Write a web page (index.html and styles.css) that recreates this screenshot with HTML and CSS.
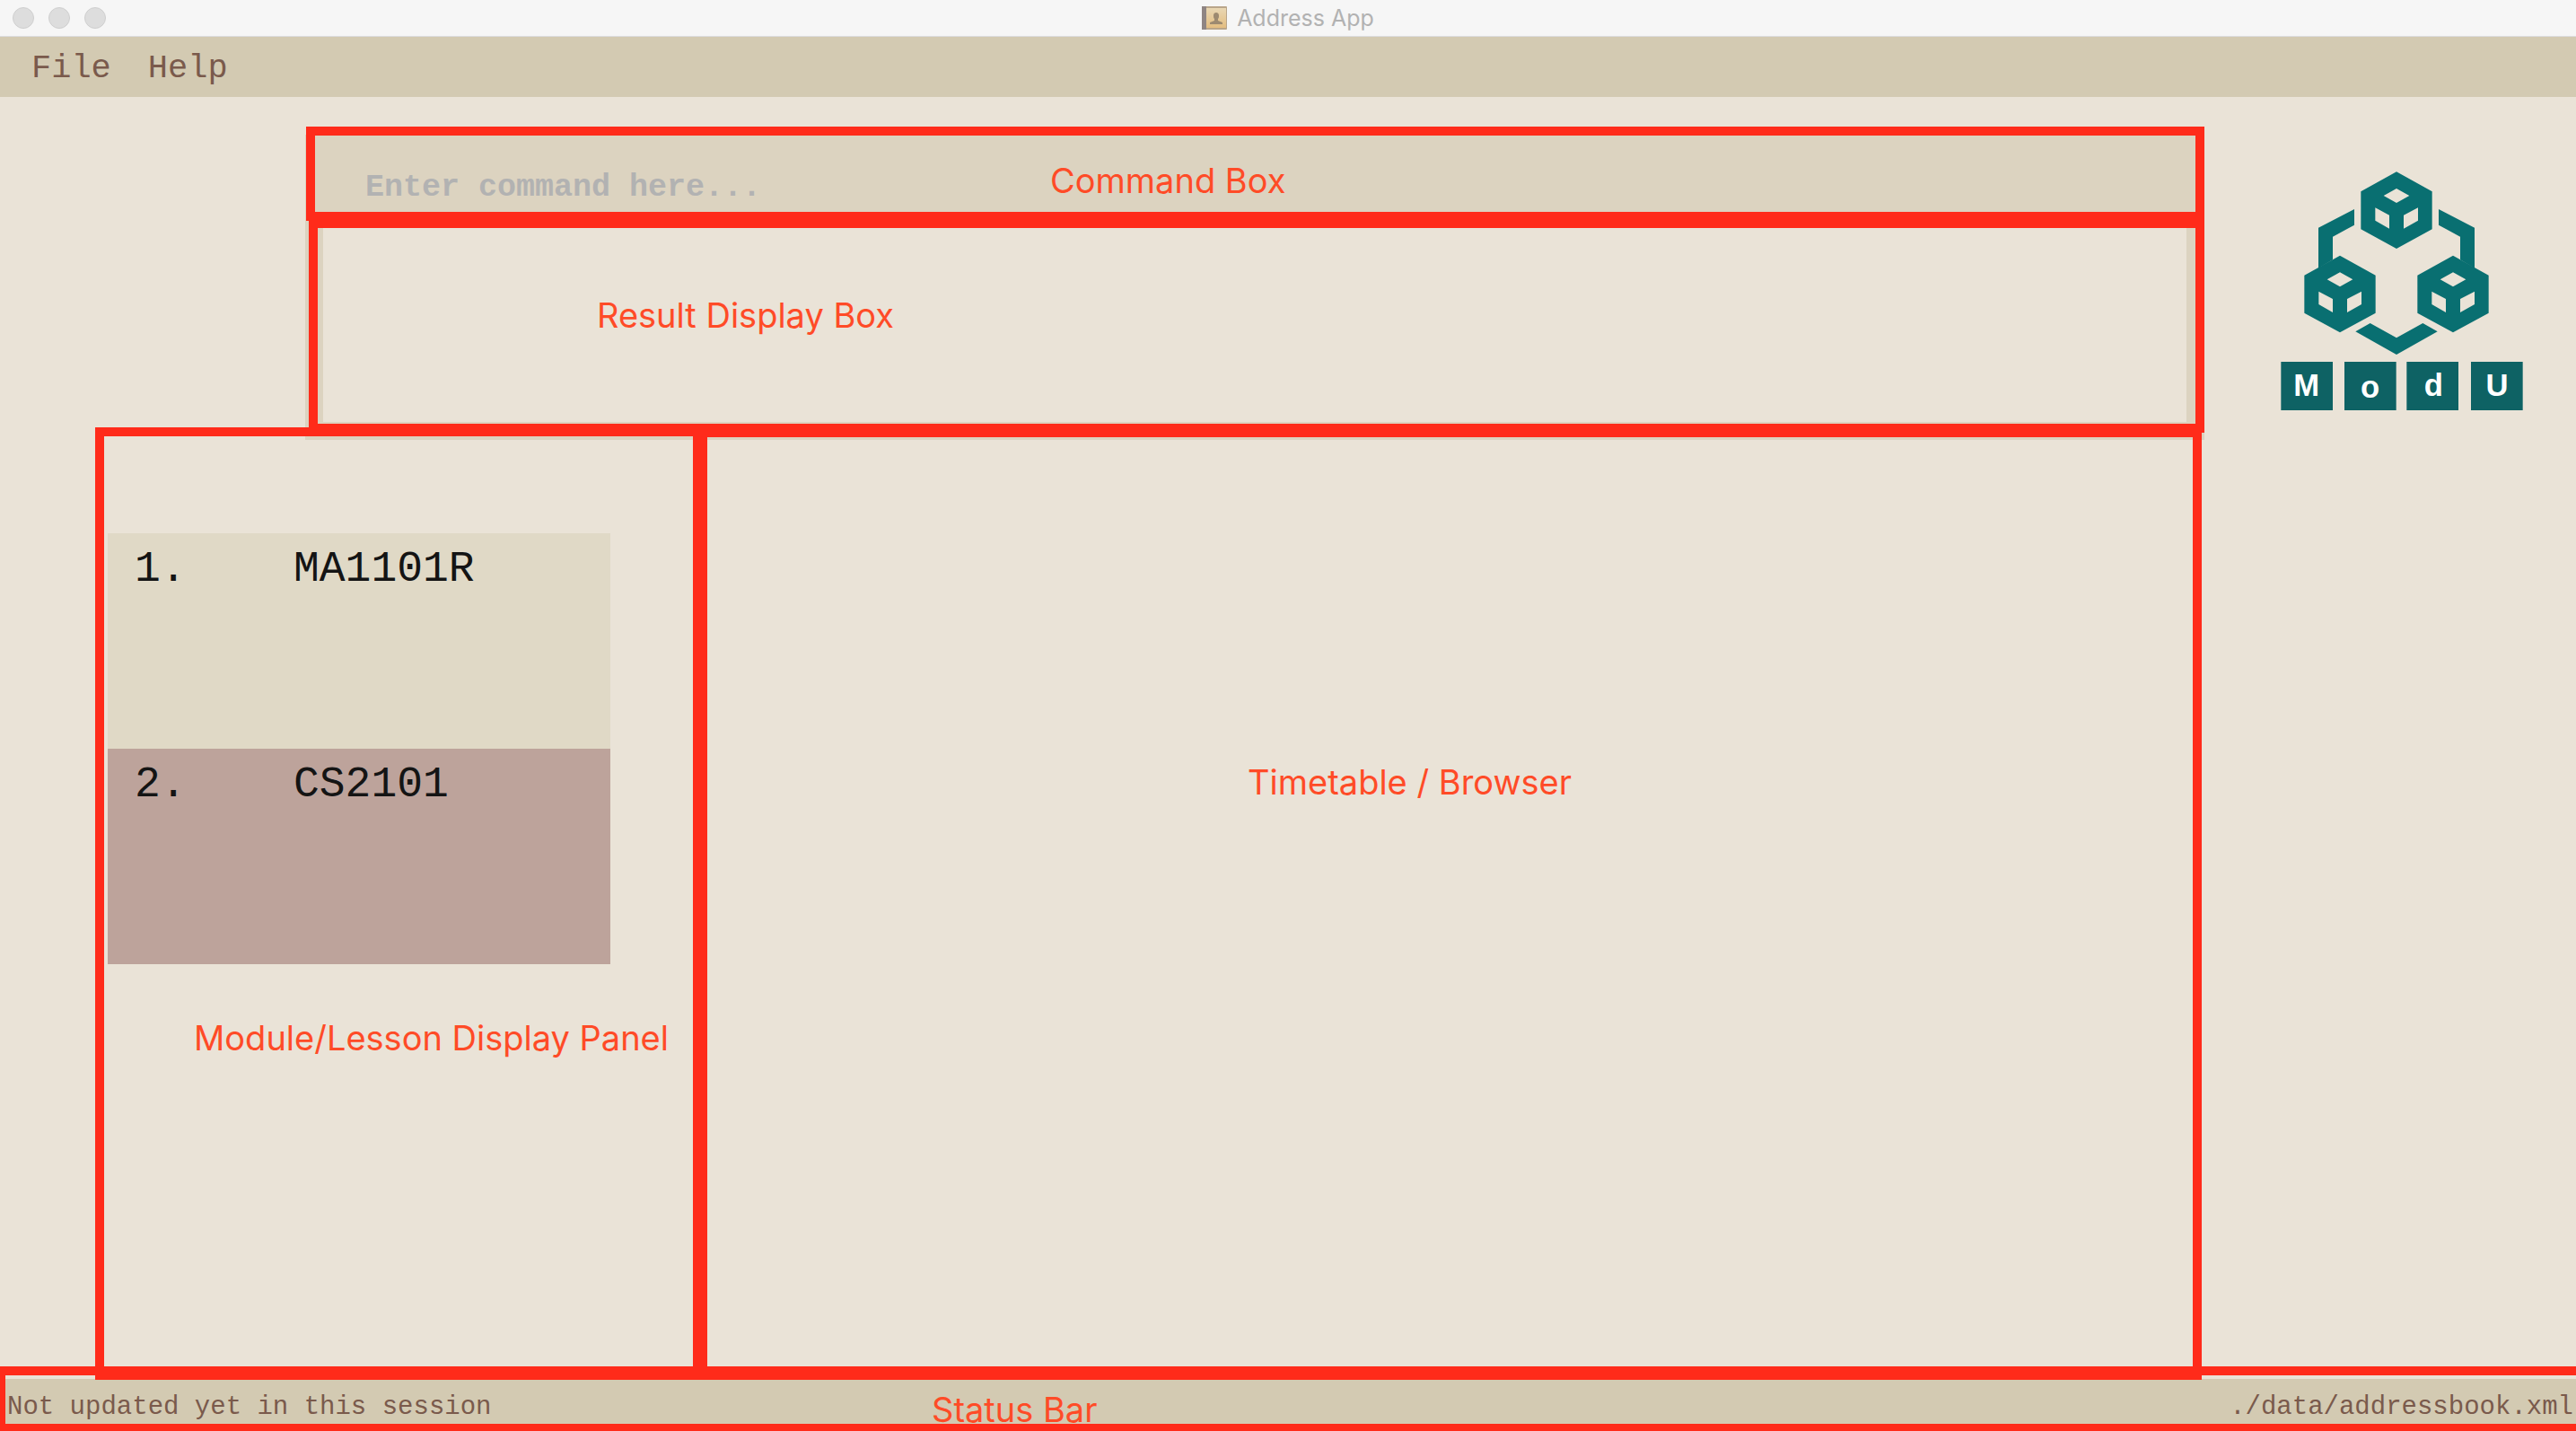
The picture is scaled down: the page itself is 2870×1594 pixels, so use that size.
FILE: index.html
```html
<!DOCTYPE html>
<html lang="en">
<head>
<meta charset="utf-8">
<title>Address App</title>
<link rel="stylesheet" href="styles.css">
</head>
<body>
<header class="titlebar">
  <div class="lights">
    <button class="light" type="button" aria-label="Close"></button>
    <button class="light" type="button" aria-label="Minimize"></button>
    <button class="light" type="button" aria-label="Zoom"></button>
  </div>
  <h1 class="title">
    <svg class="book" viewBox="0 0 28 26" aria-hidden="true">
      <defs>
        <linearGradient id="cover" x1="0" y1="0" x2="0" y2="1">
          <stop offset="0" stop-color="#e9d7b4"/>
          <stop offset="1" stop-color="#e3bd80"/>
        </linearGradient>
      </defs>
      <rect x="0" y="0" width="28" height="26" rx="1" fill="#b9a58a"/>
      <rect x="0" y="0" width="5" height="26" fill="#8f8583"/>
      <rect x="5" y="2" width="22" height="22" fill="url(#cover)"/>
      <path d="M9 20v-2l5-2v-2c-1-1-1-2-1-4 0-4 6-4 6 0 0 2 0 3-1 4v2l5 2v2z" fill="#9d8a70"/>
    </svg>
    <span>Address App</span>
  </h1>
</header>
<nav class="menubar">
  <button class="menu" type="button">File</button>
  <button class="menu" type="button">Help</button>
</nav>
<main class="main">
  <div class="workspace">
    <section class="command region">
      <input class="command-input" id="command" type="text" placeholder="Enter command here...">
      <div class="callout callout-command">
        <label class="callout-label" for="command">Command Box</label>
      </div>
    </section>
    <section class="result region">
      <div class="callout callout-result">
        <p class="callout-label">Result Display Box</p>
      </div>
    </section>
    <div class="panels">
      <section class="modules region">
        <ol class="module-list">
          <li class="module"><span class="module-index">1.</span><span>MA1101R</span></li>
          <li class="module module-selected"><span class="module-index">2.</span><span>CS2101</span></li>
        </ol>
        <div class="callout callout-modules">
          <p class="callout-label">Module/Lesson Display Panel</p>
        </div>
      </section>
      <section class="browser region">
        <div class="callout callout-browser">
          <p class="callout-label">Timetable / Browser</p>
        </div>
      </section>
    </div>
  </div>
  <aside class="brand">
    <svg class="logo" viewBox="363 212 810 801" role="img" aria-label="ModU">
      <defs>
        <path id="cube" fill-rule="evenodd" d="M119 0L238 66V192L119 257L0 192V66ZM119 56L76 80L119 104L162 80ZM48 120V163L95 190V145ZM191 120V163L143 190V145Z"/>
      </defs>
      <g fill="#096f71">
        <use href="#cube" x="631" y="213"/>
        <use href="#cube" x="442" y="493"/>
        <use href="#cube" x="820" y="493"/>
        <path d="M609 338V391L537 430V507L489 535V400Z"/>
        <path d="M891 338V391L963 430V507L1011 535V400Z"/>
        <path d="M613 747L662 719L750 768L838 719L887 747L750 824Z"/>
      </g>
      <g fill="#0e6264">
        <rect x="364" y="848" width="173" height="162"/>
        <rect x="576" y="848" width="173" height="162"/>
        <rect x="784" y="848" width="173" height="162"/>
        <rect x="999" y="848" width="173" height="162"/>
      </g>
      <g class="logo-text">
        <text x="449" y="963">M</text>
        <text x="662" y="968">o</text>
        <text x="874" y="963">d</text>
        <text x="1086" y="963">U</text>
      </g>
    </svg>
  </aside>
</main>
<footer class="status region">
  <span>Not updated yet in this session</span>
  <span>./data/addressbook.xml</span>
  <div class="callout callout-status">
    <p class="callout-label">Status Bar</p>
  </div>
</footer>
</body>
</html>
```
FILE: styles.css
```css
* { box-sizing: border-box; }

body {
  margin: 0;
  min-height: 100vh;
  display: flex;
  flex-direction: column;
  background: #eae3d7;
  color: #7a5a4c;
  font-family: "Liberation Mono", "Courier New", monospace;
}

button, input {
  font: inherit;
  color: inherit;
  border: 0;
  padding: 0;
  background: none;
}

p, h1, ol { margin: 0; padding: 0; }

/* Window chrome */
.titlebar {
  display: grid;
  grid-template-columns: 1fr auto 1fr;
  align-items: center;
  height: 41px;
  padding: 0 14px;
  background: #f6f6f6;
  border-bottom: 1px solid #dcdcdf;
}

.lights { display: flex; gap: 16px; }

.light {
  width: 24px;
  height: 24px;
  border: 1px solid #cfcfcf;
  border-radius: 50%;
  background: #dddddd;
}

.title {
  display: flex;
  align-items: center;
  gap: 11px;
  font: 400 25px/32px Inter, sans-serif;
  color: #b2b2b2;
}

.book { width: 28px; height: 26px; }

.menubar {
  display: flex;
  gap: 41px;
  height: 67px;
  padding: 3px 35px 0;
  background: #d3cab2;
  font-size: 37px;
}

/* Work area */
.main {
  flex: 1;
  display: flex;
}

.workspace {
  flex: 1;
  display: flex;
  flex-direction: column;
  padding: 42px 0 0 120px;
}

.region { position: relative; }

.command {
  height: 84px;
  margin-left: 220px;
  padding: 34px 67px 0;
  background: #dcd3c0;
}

.command-input {
  display: block;
  width: 100%;
  height: 50px;
  font-size: 35px;
  font-weight: 700;
}

.command-input::placeholder { color: #b2b2b2; opacity: 1; }

.result {
  height: 256px;
  margin-left: 220px;
  border: 20px solid #dcd3c0;
}

.panels {
  flex: 1;
  display: grid;
  grid-template-columns: 660px 1fr;
}

.modules { padding: 104px 100px 0 0; }

.module-list { list-style: none; }

.module {
  display: flex;
  height: 240px;
  padding: 16px 30px;
  background: #e0d9c6;
  color: #141414;
  font-size: 48px;
  line-height: 48px;
}

.module-selected { background: #bda39b; }

.module-index { width: 177px; }

.brand {
  width: 414px;
  padding: 83px 0 0 85px;
}

.logo { display: block; width: 270px; height: 267px; }

.logo-text {
  font: 700 104px "Liberation Sans", Arial, sans-serif;
  fill: #ffffff;
  text-anchor: middle;
}

.status {
  display: flex;
  justify-content: space-between;
  height: 58px;
  padding: 14px 3px 0 8px;
  background: #d3cab2;
  font-size: 29px;
  line-height: 36px;
}

/* Red outlines that name each part of the window */
.callout {
  position: absolute;
  z-index: 1;
  border: 10px solid #ff2b1a;
  pointer-events: none;
}

.callout-label {
  position: absolute;
  white-space: nowrap;
  font: 400 38px/48px Inter, sans-serif;
  color: #ff4b27;
}

.callout-command { inset: -9px 0 -12px 1px; }
.callout-result { inset: -10px -20px -12px -16px; }
.callout-modules { inset: -14px -2px -1px -14px; }
.callout-browser { inset: -13px 3px -1px -2px; }
.callout-status { inset: -14px 0 0 0; border-width: 10px 0 8px 6px; }

.callout-command .callout-label { left: 819px; top: 26px; }
.callout-result .callout-label { left: 311px; top: 73px; }
.callout-modules .callout-label { left: 100px; top: 646px; }
.callout-browser .callout-label { left: 602px; top: 360px; }
.callout-status .callout-label { left: 1032px; top: 14px; }
```
